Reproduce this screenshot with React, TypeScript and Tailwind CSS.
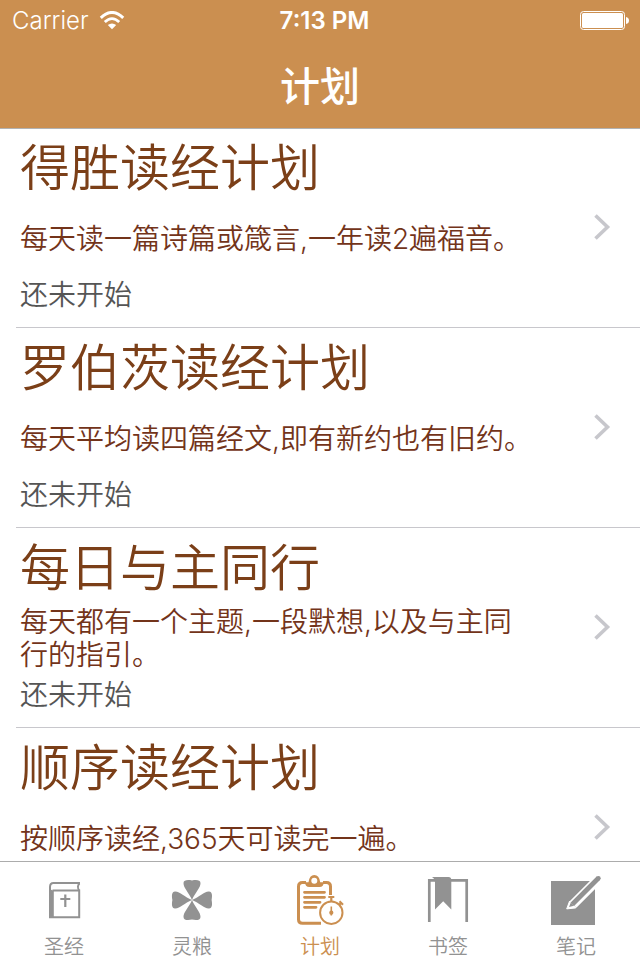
import clsx from "clsx";
import type { ReactNode } from "react";

type Plan = {
  title: string;
  description: string;
  status?: string;
};

type Tab = {
  label: string;
  icon: ReactNode;
  active?: boolean;
};

const plans: Plan[] = [
  { title: "得胜读经计划", description: "每天读一篇诗篇或箴言,一年读2遍福音。", status: "还未开始" },
  { title: "罗伯茨读经计划", description: "每天平均读四篇经文,即有新约也有旧约。", status: "还未开始" },
  { title: "每日与主同行", description: "每天都有一个主题,一段默想,以及与主同行的指引。", status: "还未开始" },
  { title: "顺序读经计划", description: "按顺序读经,365天可读完一遍。" },
];

function TabIcon({ children }: { children: ReactNode }) {
  return (
    <svg viewBox="0 0 64 56" className="h-14 w-16" fill="none" stroke="currentColor" aria-hidden="true">
      {children}
    </svg>
  );
}

function BibleIcon() {
  return (
    <TabIcon>
      <path d="M48 11H21.5Q18 11 18 15V45.3H47.2V18.6H20.5" strokeWidth="2" />
      <path d="M47.5 11.5Q44.5 14.5 47.2 18.6" strokeWidth="1.8" />
      <path d="M17.5 14Q18 18.6 21.8 18.6V46H17.5Z" fill="currentColor" stroke="none" />
      <path d="M33.3 22.5V35M28.3 27H38.3" strokeWidth="2.2" />
    </TabIcon>
  );
}

function CloverIcon() {
  const leaf = "M32 28C29 20.5 23.3 16 23.5 11C23.6 7.6 28 7.6 32 8.4C36 7.6 40.4 7.6 40.5 11C40.7 16 35 20.5 32 28Z";
  return (
    <TabIcon>
      <g fill="currentColor" stroke="none">
        {[0, 90, 180, 270].map((angle) => (
          <path key={angle} d={leaf} transform={`rotate(${angle} 32 28)`} />
        ))}
      </g>
    </TabIcon>
  );
}

function PlanIcon() {
  return (
    <TabIcon>
      <path d="M18 10.5H14.5Q10.5 10.5 10.5 14.5V47.5Q10.5 51.3 14.5 51.3H33" strokeWidth="3" />
      <path d="M35 10.5H38.5Q42.5 10.5 42.5 14.5V23" strokeWidth="3" />
      <path
        d="M17 10.2H20.5Q21.5 3 26.3 3Q31.2 3 32.2 10.2H35.8Q35.8 15 31.5 15H21.3Q17 15 17 10.2ZM26.3 5.7A3 3 0 1 0 26.3 11.7A3 3 0 1 0 26.3 5.7Z"
        fill="currentColor"
        fillRule="evenodd"
        stroke="none"
      />
      <path d="M16.5 20.3H36.5M16.5 25.3H36.5M16.5 30.3H32M16.5 35.3H28" strokeWidth="2.8" strokeLinecap="round" />
      <circle cx="43.3" cy="40.7" r="11.2" strokeWidth="2" />
      <path d="M40.3 25H46.3M43.3 25V29.5" strokeWidth="2.2" />
      <path d="M51 33L53.3 30.8M51.5 29.3L55 32.7" strokeWidth="2.2" />
      <path d="M43.3 34.5V43.5" strokeWidth="1.6" />
      <circle cx="43.3" cy="40.7" r="2.1" fill="currentColor" stroke="none" />
    </TabIcon>
  );
}

function BookmarkIcon() {
  return (
    <TabIcon>
      <path d="M13.3 50V8.4H19M35 8.4H50.7V50" strokeWidth="2.7" />
      <path d="M16 5H32.5Q35.3 5 35.3 8V37.5L27.2 29.2L19 37.5V10.5Q19 6.5 16 5Z" fill="currentColor" stroke="none" />
    </TabIcon>
  );
}

function NoteIcon() {
  return (
    <TabIcon>
      <path d="M7 9H51V53H7Z" fill="currentColor" stroke="none" />
      <path d="M57.5 4L29 32.5" stroke="white" strokeWidth="9.5" />
      <path d="M25.6 29L22.7 36.9L31.8 35.9Z" fill="white" stroke="white" strokeLinejoin="round" />
      <path d="M54.3 6.3L28.4 32.2" strokeWidth="4.8" />
      <circle cx="54.3" cy="6.3" r="2.4" fill="currentColor" stroke="none" />
      <path d="M26.8 30.6L25 34.9L30 33.8Z" fill="currentColor" stroke="none" />
    </TabIcon>
  );
}

const tabs: Tab[] = [
  { label: "圣经", icon: <BibleIcon /> },
  { label: "灵粮", icon: <CloverIcon /> },
  { label: "计划", icon: <PlanIcon />, active: true },
  { label: "书签", icon: <BookmarkIcon /> },
  { label: "笔记", icon: <NoteIcon /> },
];

function StatusBar() {
  return (
    <div className="grid h-11 grid-cols-3 items-center pr-[11px] pb-[3px] pl-3 text-[24px] leading-10">
      <div className="flex items-center gap-2.5">
        <span>Carrier</span>
        <svg viewBox="0 0 26 20" className="h-5 w-[26px]" fill="none" stroke="white" aria-hidden="true">
          <path d="M1.8 6.8Q13 -3.8 24.2 6.8" strokeWidth="3" />
          <path d="M5.8 11.1Q13 4.2 20.2 11.1" strokeWidth="2.8" />
          <path d="M13 18.3L8.8 14.1Q13 10.7 17.2 14.1Z" fill="white" stroke="none" />
        </svg>
      </div>
      <span className="pl-2 text-center font-semibold">7:13 PM</span>
      <svg viewBox="0 0 50 20" className="h-5 w-[50px] justify-self-end" fill="none" aria-hidden="true">
        <rect x="1.5" y="0.5" width="44" height="18" rx="3" stroke="white" />
        <rect x="3" y="2" width="41" height="15" rx="1.5" fill="white" />
        <path d="M47 6Q50 6.5 50 9.5Q50 12.5 47 13Z" fill="white" />
      </svg>
    </div>
  );
}

function PlanRow({ plan }: { plan: Plan }) {
  return (
    <li className="ml-4 border-b border-[#c8c7cc]">
      <a href="#" className="flex min-h-[199px] items-center gap-14 pr-7 pl-1">
        <div className="flex-1 self-start pt-2.5 pb-2.5">
          <h2 className="text-[50px] leading-[60px] text-[#7b3f18]">{plan.title}</h2>
          <p className="mt-2 flex min-h-[66px] items-center text-[28px] leading-[33px] text-[#73341a]">
            {plan.description}
          </p>
          {plan.status ? <p className="mt-px text-[28px] leading-[44px] text-[#555555]">{plan.status}</p> : null}
        </div>
        <svg viewBox="0 0 20 28" className="h-7 w-5 shrink-0" fill="none" aria-hidden="true">
          <path d="M3.5 1.5L15.5 13L3.5 24.5" stroke="#c7c7cc" strokeWidth="3.6" />
        </svg>
      </a>
    </li>
  );
}

export default function App() {
  return (
    <div className="flex h-screen flex-col bg-white font-['Inter','Noto_Sans_CJK_SC',sans-serif] font-[350]">
      <header className="relative z-10 border-b border-[#b2b2b2] bg-[#cb8f50] text-white">
        <StatusBar />
        <h1 className="pt-[13px] pb-[11px] text-center text-[40px] leading-[60px] font-medium">计划</h1>
      </header>
      <main className="-mt-px min-h-0 flex-1 overflow-hidden">
        <ul>
          {plans.map((plan) => (
            <PlanRow key={plan.title} plan={plan} />
          ))}
        </ul>
      </main>
      <nav className="grid grid-cols-5 border-t border-[#acacac] bg-white pt-2.5">
        {tabs.map((tab) => (
          <button
            key={tab.label}
            type="button"
            aria-current={tab.active ? "page" : undefined}
            className={clsx("flex flex-col items-center", tab.active ? "text-[#cb8f50]" : "text-[#929292]")}
          >
            {tab.icon}
            <span className="pt-1.5 text-[20px] leading-[26px]">{tab.label}</span>
          </button>
        ))}
      </nav>
    </div>
  );
}
